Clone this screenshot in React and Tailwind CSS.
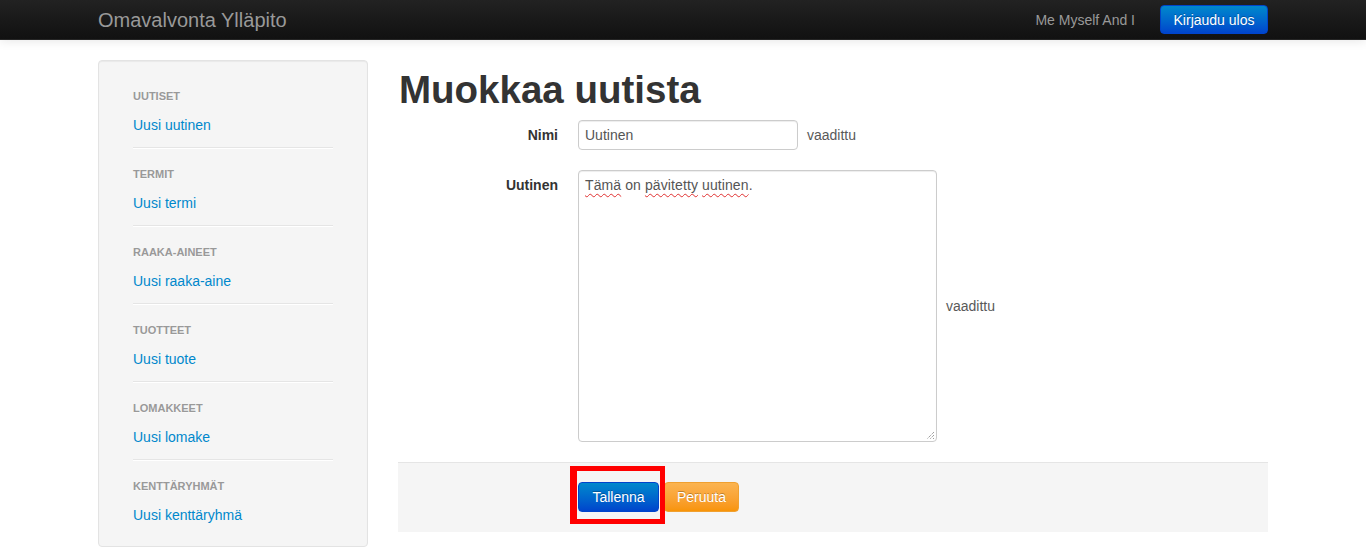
import React from 'react'

const sections = [
  { title: 'Uutiset', link: 'Uusi uutinen' },
  { title: 'Termit', link: 'Uusi termi' },
  { title: 'Raaka-aineet', link: 'Uusi raaka-aine' },
  { title: 'Tuotteet', link: 'Uusi tuote' },
  { title: 'Lomakkeet', link: 'Uusi lomake' },
  { title: 'Kenttäryhmät', link: 'Uusi kenttäryhmä' },
]

const Spell = ({ children }) => (
  <span className="underline decoration-wavy decoration-[#e03030] decoration-1 underline-offset-[3px]">{children}</span>
)

const App = () => {
  return (
    <div className="min-h-[557px] bg-white text-[14px] leading-5 text-[#333] font-['Liberation_Sans',Arial,sans-serif]">
      {/* top bar */}
      <div className="h-10 bg-gradient-to-b from-[#222222] to-[#111111] border-b border-[#252525] shadow-[0_1px_10px_rgba(0,0,0,0.1)] relative z-10">
        <div className="w-[1170px] mx-auto h-full flex items-center justify-between">
          <a className="text-[20px] text-[#999] leading-5">Omavalvonta Ylläpito</a>
          <div className="flex items-center">
            <span className="text-[#999]">Me Myself And I</span>
            <button className="ml-[25px] w-[108px] h-[29px] rounded-[4px] text-white bg-gradient-to-b from-[#0088cc] to-[#0044cc] border border-[#0044cc] [text-shadow:0_-1px_0_rgba(0,0,0,0.25)]">
              Kirjaudu ulos
            </button>
          </div>
        </div>
      </div>

      <div className="w-[1170px] mx-auto pt-5 flex gap-[30px] items-start">
        {/* sidebar */}
        <div className="w-[270px] bg-[#f5f5f5] border border-[#e3e3e3] rounded-[4px] px-[34px] pt-[25px] pb-[21px] shadow-[inset_0_1px_1px_rgba(0,0,0,0.05)]">
          {sections.map((s, i) => (
            <div key={s.title}>
              {i > 0 && <div className="mt-3 mb-[15px] h-px bg-[#e5e5e5] border-b border-white box-content" />}
              <div className="h-5 leading-5 text-[11px] font-bold uppercase text-[#999] [text-shadow:0_1px_0_rgba(255,255,255,0.5)]">{s.title}</div>
              <a className="block mt-[9px] h-5 leading-5 text-[#0088cc]">{s.link}</a>
            </div>
          ))}
        </div>

        {/* main */}
        <div className="w-[870px]">
          <h1 className="text-[38.5px] leading-10 font-bold my-[10px] ml-[1px]">Muokkaa uutista</h1>

          <div className="mt-[10px]">
            <div className="flex items-start mb-5">
              <label className="w-[160px] text-right font-bold pt-[5px]">Nimi</label>
              <div className="ml-5 flex items-center">
                <div className="w-[220px] h-[30px] border border-[#ccc] rounded-[4px] px-[6px] py-1 shadow-[inset_0_1px_1px_rgba(0,0,0,0.075)] text-[#555]">Uutinen</div>
                <span className="ml-[9px] text-[#595959]">vaadittu</span>
              </div>
            </div>

            <div className="flex items-start mb-5">
              <label className="w-[160px] text-right font-bold pt-[5px]">Uutinen</label>
              <div className="ml-5 flex items-center">
                <div className="relative w-[359px] h-[272px] border border-[#ccc] rounded-[4px] px-[6px] py-1 shadow-[inset_0_1px_1px_rgba(0,0,0,0.075)] text-[#555] tracking-[0.1px]">
                  <Spell>Tämä</Spell> on <Spell>pävitetty</Spell> <Spell>uutinen</Spell>.
                  <svg className="absolute right-[1px] bottom-[1px]" width="9" height="9" viewBox="0 0 9 9">
                    <path d="M8 1 L1 8 M8 4 L4 8 M8 7 L7 8" stroke="#777" strokeWidth="1" strokeDasharray="1 1" />
                  </svg>
                </div>
                <span className="ml-[9px] text-[#595959]">vaadittu</span>
              </div>
            </div>

            <div className="relative bg-[#f5f5f5] border-t border-[#e5e5e5] pt-[19px] pb-5 pl-[180px] flex gap-[5px]">
              <button className="w-[81px] h-[30px] rounded-[4px] text-white bg-gradient-to-b from-[#0088cc] to-[#0044cc] border border-[#0044cc] [text-shadow:0_-1px_0_rgba(0,0,0,0.25)]">
                Tallenna
              </button>
              <button className="w-[75px] h-[30px] rounded-[4px] text-white bg-gradient-to-b from-[#fbb450] to-[#f89406] border border-[#f0a030] [text-shadow:0_-1px_0_rgba(0,0,0,0.25)]">
                Peruuta
              </button>
              <div className="absolute left-[172px] top-[3px] w-[95px] h-[58px] border-[5px] border-l-[7px] border-[#ff0000] pointer-events-none" />
            </div>
          </div>
        </div>
      </div>
    </div>
  )
}

export default App
